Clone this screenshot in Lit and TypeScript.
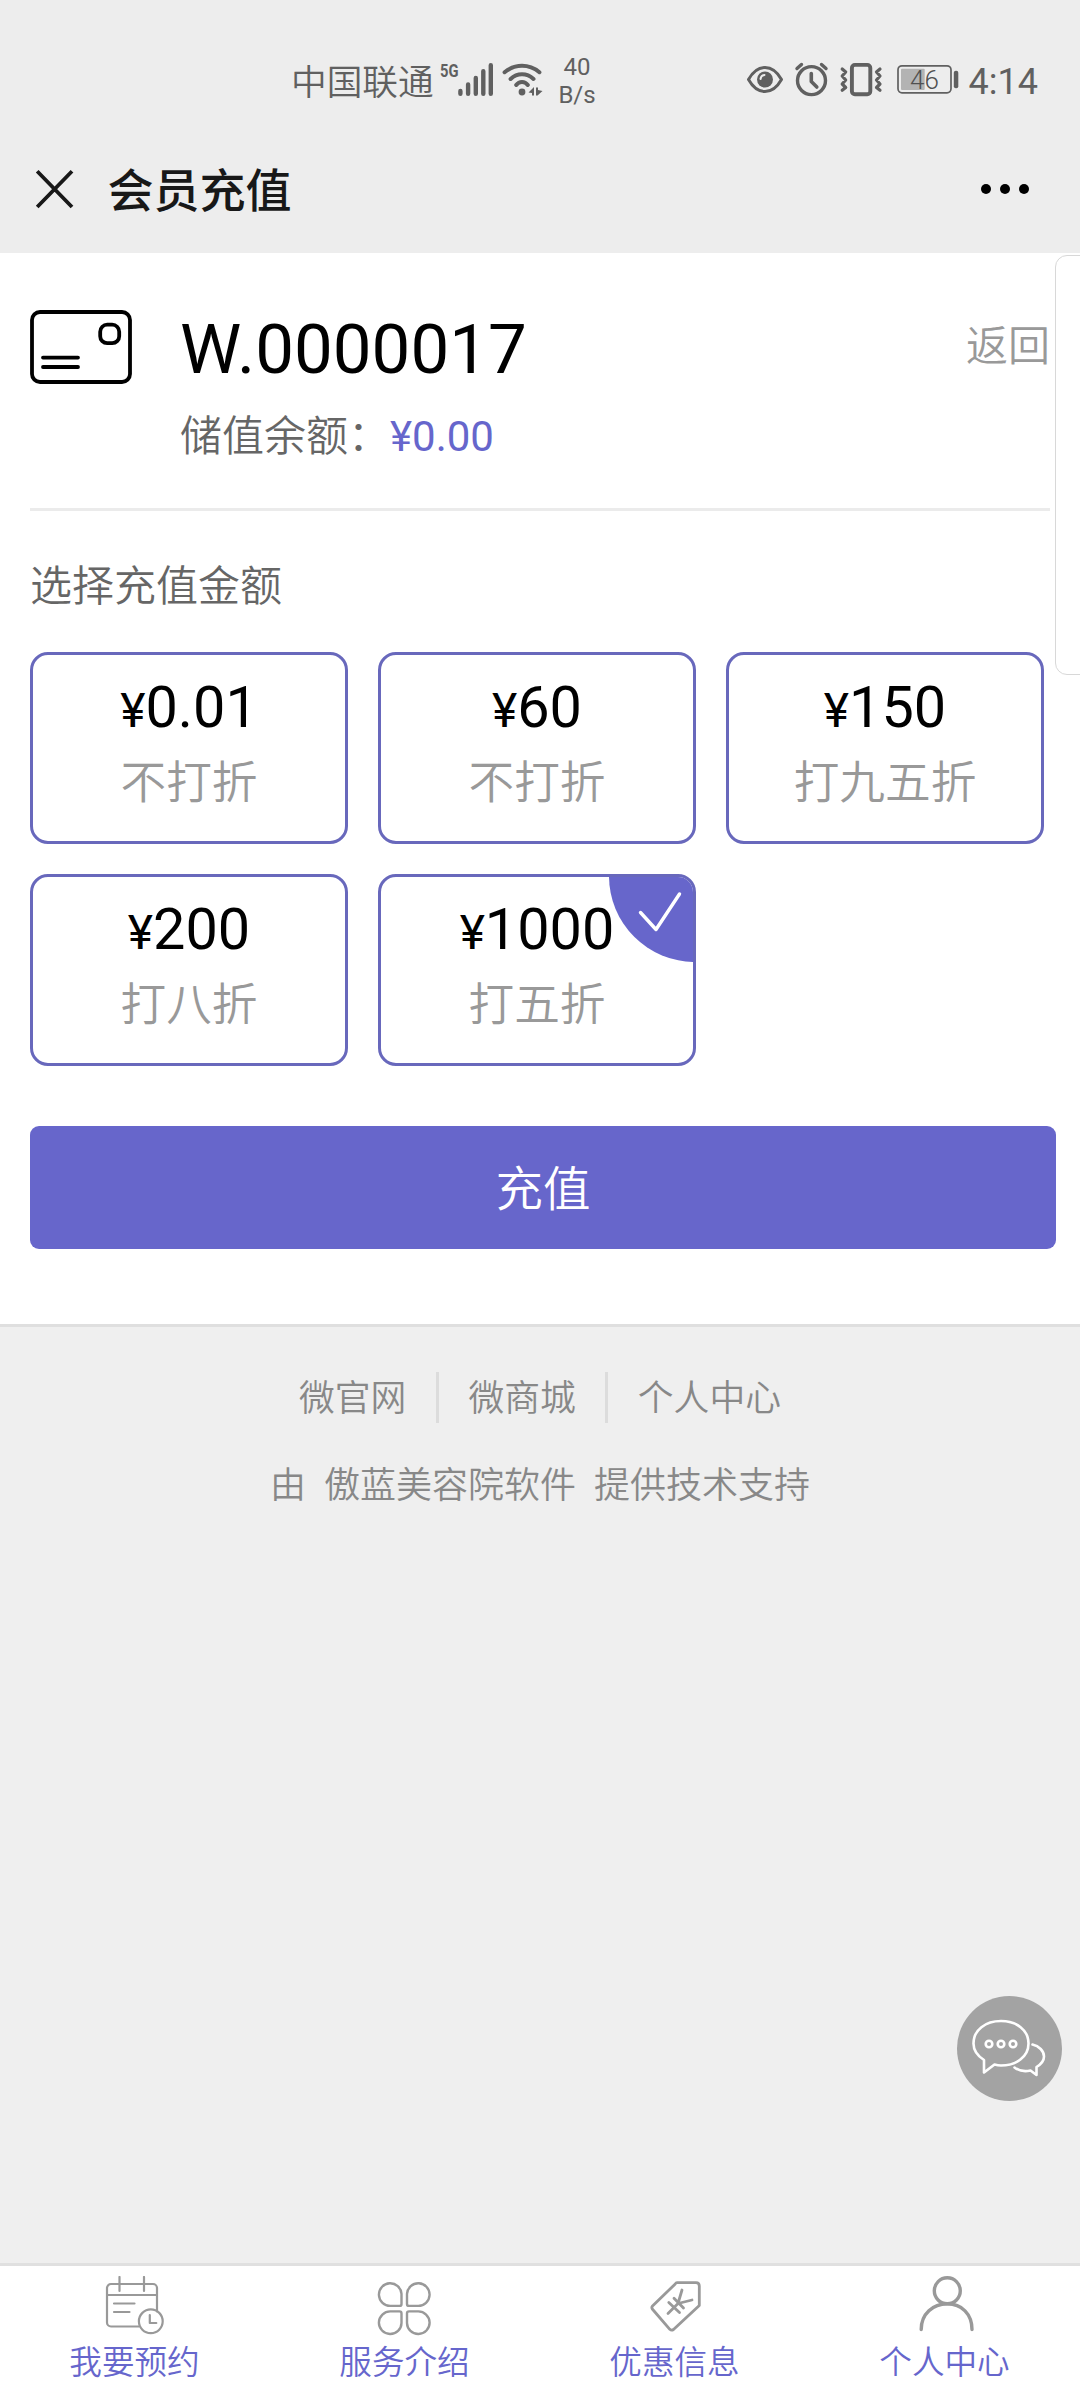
import { LitElement, html, css, svg } from "lit";
import { customElement, state } from "lit/decorators.js";

interface Plan {
  amount: string;
  discount: string;
}

const PLANS: Plan[] = [
  { amount: "0.01", discount: "不打折" },
  { amount: "60", discount: "不打折" },
  { amount: "150", discount: "打九五折" },
  { amount: "200", discount: "打八折" },
  { amount: "1000", discount: "打五折" },
];

@customElement("status-bar")
class StatusBar extends LitElement {
  static styles = css`
    :host {
      display: flex;
      align-items: flex-start;
      box-sizing: border-box;
      height: 126px;
      padding: 58px 42px 0 291px;
      color: #606060;
    }
    .carrier {
      width: 145px;
      font-size: 35.700px;
      font-weight: 350;
      line-height: 50px;
      white-space: nowrap;
    }
    .signal {
      margin-left: 2px;
    }
    .rate {
      width: 44px;
      margin-left: 7px;
      margin-top: -5px;
      font-size: 24px;
      line-height: 28px;
      text-align: center;
    }
    .icons {
      margin-left: auto;
    }
    .time {
      margin-left: 7px;
      margin-top: -1px;
      font-size: 36px;
      line-height: 50px;
    }
    svg {
      display: block;
      flex: none;
    }
    .g5 {
      font: bold 19px Roboto, sans-serif;
    }
    .pct {
      font: 300 26px Roboto, sans-serif;
    }
  `;
  render() {
    return html`
      <span class="carrier">中国联通</span>
      <svg class="signal" width="110" height="44" viewBox="438 58 110 44" fill="none" stroke="#606060" stroke-linecap="round">
        <text class="g5" x="440" y="77" textLength="18.5" lengthAdjust="spacingAndGlyphs" fill="#606060" stroke="none">5G</text>
        <path stroke-width="4.4" d="M460.4 91v2.8M468.1 84.500v9.300M475.800 78v15.800M483.300 71.200v22.600M490.800 65.200v28.600" />
        <path stroke-width="4" d="M504.600 72.200Q512.500 65.800 522 65.800T539.400 72.200M510.600 79Q515.500 74.300 522 74.300T533.500 79M516.200 85Q518.500 82 522 82T527.800 85" />
        <circle cx="522" cy="92" r="3.400" fill="#606060" stroke="none" />
        <path fill="#606060" stroke="none" d="M528.500 92.500 534 87v8.500h-2v-2.500zM536 87.500h2v2.500l4.500 1-5 4.500h-1.500z" />
      </svg>
      <div class="rate">40<br />B/s</div>
      <svg class="icons" width="216" height="44" viewBox="746 58 216 44" fill="none" stroke="#606060" stroke-linecap="round" stroke-linejoin="round">
        <path stroke-width="3" d="M748.500 79.500C753 71.500 759 67.500 765 67.500S777 71.500 781.500 79.500C777 87.500 771 91.500 765 91.500S753 87.500 748.500 79.500Z" />
        <circle cx="765" cy="79.500" r="8" fill="#606060" stroke="none" />
        <path stroke="#ededed" stroke-width="2" d="M760.500 79Q761 75.500 764.500 75" />
        <circle cx="811.500" cy="80.600" r="14" stroke-width="3.400" />
        <path stroke-width="3.600" d="M811.300 73.500v8l5.500 5.500" />
        <path stroke-width="3.400" d="M797 68.500l4.500-4M826 68.500l-4.500-4" />
        <rect x="851.900" y="64.900" width="18.400" height="29.400" rx="3" stroke-width="3.900" />
        <path stroke-width="3.200" d="M842.200 69l3.500 3-3.500 4 3.500 4-3.500 4 3.500 3.500-3.500 2.800M880 69l-3.500 3 3.500 4-3.500 4 3.500 4-3.500 3.500 3.500 2.800" />
        <rect x="898" y="65.800" width="53" height="27" rx="4" stroke-width="1.700" />
        <rect x="901" y="68.700" width="23.700" height="21.300" rx="1" fill="#b3b3b3" stroke="none" />
        <rect x="953.800" y="70.700" width="4.500" height="17.600" rx="2" fill="#606060" stroke="none" />
        <text class="pct" x="910" y="88.700" fill="#505050" stroke="none">46</text>
      </svg>
      <span class="time">4:14</span>
    `;
  }
}

@customElement("title-bar")
class TitleBar extends LitElement {
  static styles = css`
    :host {
      display: flex;
      align-items: center;
      box-sizing: border-box;
      height: 127px;
      padding: 2px 50px 0 35px;
      color: #181818;
    }
    .title {
      flex: 1;
      margin-left: 32.500px;
      font-size: 46px;
      font-weight: 500;
      line-height: 60px;
    }
    svg {
      display: block;
      margin-top: -4px;
    }
  `;
  render() {
    return html`
      <svg width="40" height="40" viewBox="0 0 40 40" stroke="#181818" stroke-width="3.800">
        <path d="M2.200 2.200 37 38M37 2.200 2.200 38" />
      </svg>
      <span class="title">会员充值</span>
      <svg width="50" height="12" viewBox="0 0 50 12">
        <circle cx="6" cy="6" r="5" />
        <circle cx="25" cy="6" r="5" />
        <circle cx="44" cy="6" r="5" />
      </svg>
    `;
  }
}

@customElement("recharge-panel")
class RechargePanel extends LitElement {
  @state() private selected = 4;

  static styles = css`
    :host {
      display: block;
      box-sizing: border-box;
      height: 1074px;
      padding: 0 24px 0 30px;
      background: #fff;
      border-bottom: 3px solid #dfdfdf;
    }
    .member {
      display: flex;
      align-items: flex-start;
      height: 255px;
      margin-right: 6px;
      border-bottom: 3px solid #ebebeb;
    }
    .card-icon {
      display: block;
      margin-top: 57px;
    }
    .info {
      flex: 1;
      padding: 57px 0 0 48px;
    }
    .number {
      font-size: 69px;
      line-height: 80px;
      color: #000;
    }
    .balance {
      margin-top: 17px;
      font-size: 42px;
      font-weight: 350;
      line-height: 60px;
      color: #666;
    }
    .money {
      font-weight: 400;
      color: #66c;
    }
    .back {
      margin-top: 73px;
      font-size: 42px;
      font-weight: 350;
      line-height: 42px;
      color: #999;
    }
    .label {
      padding: 46px 0 35px;
      font-size: 42px;
      font-weight: 350;
      line-height: 60px;
      color: #666;
    }
    .plans {
      display: grid;
      grid-template-columns: repeat(3, 318px);
      grid-auto-rows: 192px;
      gap: 30px;
    }
    .plan {
      position: relative;
      box-sizing: border-box;
      overflow: hidden;
      padding-top: 24px;
      border: 3px solid #6868bc;
      border-radius: 18px;
      text-align: center;
    }
    .amount {
      font-size: 57.600px;
      line-height: 57px;
      color: #000;
    }
    .yen {
      font-size: 48px;
    }
    .discount {
      margin-top: 15px;
      font-size: 45.700px;
      font-weight: 350;
      line-height: 60px;
      color: #999;
    }
    .check {
      position: absolute;
      top: -1px;
      right: -2px;
    }
    .pay {
      display: block;
      width: 100%;
      height: 123px;
      margin-top: 60px;
      padding: 0 0 5px;
      border: 0;
      border-radius: 9px;
      background: #6766cb;
      font: inherit;
      font-size: 47.500px;
      font-weight: 350;
      color: #fff;
    }
  `;
  render() {
    return html`
      <div class="member">
        <svg class="card-icon" width="102" height="74" viewBox="0 0 102 74" fill="none" stroke="#000" stroke-width="3.800">
          <rect x="2" y="2" width="98" height="70" rx="8" />
          <rect x="70.200" y="14.700" width="19" height="18.500" rx="7" />
          <path stroke-linecap="round" d="M13 47.600h35M13 57h35" />
        </svg>
        <div class="info">
          <div class="number">W.0000017</div>
          <div class="balance">储值余额：<span class="money">¥0.00</span></div>
        </div>
        <span class="back">返回</span>
      </div>
      <div class="label">选择充值金额</div>
      <div class="plans">
        ${PLANS.map(
          (p, i) => html`
            <div class="plan" @click=${() => (this.selected = i)}>
              <div class="amount"><span class="yen">¥</span>${p.amount}</div>
              <div class="discount">${p.discount}</div>
              ${i === this.selected
                ? html`<svg class="check" width="86" height="86" viewBox="0 0 86 86">
                    <path fill="#6766cb" d="M0 0H86V86A86 86 0 0 1 0 0Z" />
                    <path fill="none" stroke="#fff" stroke-width="3.400" stroke-linecap="round" stroke-linejoin="round" d="M31.500 36.500 47 53.500 70.500 18" />
                  </svg>`
                : null}
            </div>
          `
        )}
      </div>
      <button class="pay">充值</button>
    `;
  }
}

@customElement("site-footer")
class SiteFooter extends LitElement {
  static styles = css`
    :host {
      display: block;
      flex: 1;
      padding-top: 45px;
      font-size: 36px;
      font-weight: 350;
      color: #888;
    }
    .links,
    .credit {
      display: flex;
      justify-content: center;
      line-height: 51px;
    }
    .link {
      box-sizing: border-box;
      height: 51px;
      padding: 2px 29.500px 0;
      font-size: 35.800px;
    }
    .link + .link {
      border-left: 3px solid #dcdcdc;
    }
    .credit {
      gap: 18px;
      margin-top: 38px;
    }
  `;
  render() {
    return html`
      <div class="links">
        ${["微官网", "微商城", "个人中心"].map((t) => html`<span class="link">${t}</span>`)}
      </div>
      <div class="credit"><span>由</span><span>傲蓝美容院软件</span><span>提供技术支持</span></div>
    `;
  }
}

/* Icons share a 60x60 box; the y axis starts at the top of the icon row. */
const TABS = [
  {
    label: "我要预约",
    icon: svg`<g stroke-width="2.200"><path d="M52 35.500V12a4 4 0 0 0-4-4H6a4 4 0 0 0-4 4V46.500a4 4 0 0 0 4 4H34M2 19h50M14.500 1v14M39 1v14M9 27.500h20.500M9 36h15.500" /><circle cx="45.800" cy="45.300" r="11.900" /><path d="M44.800 39v8h6.500" /></g>`,
  },
  {
    label: "服务介绍",
    icon: svg`<g stroke-width="2.400" transform="translate(-1 -0.600)"><path d="M27.500 28V18.500A11.300 11.300 0 1 0 16.500 30.500H25.500Q27.500 30.500 27.500 28.500ZM33 28V18.500A11.300 11.300 0 1 1 44 30.500H35Q33 30.500 33 28.500ZM27.500 38.500V47.500A11.300 11.300 0 1 1 16.500 36H25.500Q27.500 36 27.500 38ZM33 38.500V47.500A11.300 11.300 0 1 0 44 36H35Q33 36 33 38Z" /></g>`,
  },
  {
    label: "优惠信息",
    icon: svg`<g stroke-width="2.800"><path d="M32 6.700H51Q54.300 6.700 54.300 10V29.500L28.500 53.500Q26.500 54.800 24.800 53.300L7.300 33Q6.300 31.300 7.500 30L30 8.200Q31 6.700 32 6.700Z" /><path d="M23 37.500 33 27.500 37 14M33 27.500 47 24M23.800 26.500 34.500 36.500M29 22.200 38.500 32" /></g>`,
  },
  {
    label: "个人中心",
    icon: svg`<g stroke-width="3.400"><circle cx="32.300" cy="14.800" r="13" /><path d="M6.200 53.500C6.200 38 18 27.800 32.300 27.800S57 38 57 53.500" /></g>`,
  },
];

@customElement("tab-bar")
class TabBar extends LitElement {
  static styles = css`
    :host {
      display: grid;
      grid-template-columns: repeat(4, 1fr);
      box-sizing: border-box;
      height: 137px;
      border-top: 3px solid #e0e0e0;
      background: #fff;
    }
    .tab {
      display: flex;
      flex-direction: column;
      align-items: center;
      padding: 10px 1px 0 0;
      font-size: 32.600px;
      font-weight: 350;
      line-height: 46px;
      color: #66c;
    }
    svg {
      display: block;
      margin-bottom: 4px;
    }
  `;
  render() {
    return TABS.map(
      (t) => html`
        <div class="tab">
          <svg width="60" height="60" viewBox="0 0 60 60" fill="none" stroke="#999" stroke-linecap="round" stroke-linejoin="round">${t.icon}</svg>
          <span>${t.label}</span>
        </div>
      `
    );
  }
}

@customElement("app-root")
class AppRoot extends LitElement {
  static styles = css`
    :host {
      position: relative;
      display: flex;
      flex-direction: column;
      width: 1080px;
      height: 2400px;
      overflow: hidden;
      background: #efefef;
      font-family: Roboto, "Noto Sans CJK SC", sans-serif;
    }
    .top {
      background: #ededed;
    }
    .drawer {
      position: absolute;
      top: 255px;
      right: -40px;
      box-sizing: border-box;
      width: 65px;
      height: 420px;
      border: 1px solid #d8d8d8;
      border-radius: 12px;
      background: #fff;
    }
    .chat {
      position: absolute;
      top: 1996px;
      right: 18px;
      display: block;
    }
  `;
  render() {
    return html`
      <div class="top">
        <status-bar></status-bar>
        <title-bar></title-bar>
      </div>
      <recharge-panel></recharge-panel>
      <site-footer></site-footer>
      <tab-bar></tab-bar>
      <div class="drawer"></div>
      <svg class="chat" width="105" height="105" viewBox="0 0 105 105" fill="none" stroke="#fff" stroke-width="2.600" stroke-linecap="round" stroke-linejoin="round">
        <circle cx="52.500" cy="52.500" r="52.500" fill="#a3a3a3" stroke="none" />
        <path d="M27 64C20 59.500 16.500 54 16.500 47.500C16.500 34 28.500 25 44 25S71.500 34 71.500 47.500S59 69.500 44 69.500Q41 69.500 37.500 68.500L27 76.500Z" />
        <path d="M75.500 48.500C82 50 87 55 87 60.500Q87 66.500 79.500 71V79L73.500 74.500C67 76 61.500 74.500 57.500 71.500" />
        <circle cx="32" cy="48" r="3.300" />
        <circle cx="44" cy="48" r="3.300" />
        <circle cx="56" cy="48" r="3.300" />
      </svg>
    `;
  }
}
